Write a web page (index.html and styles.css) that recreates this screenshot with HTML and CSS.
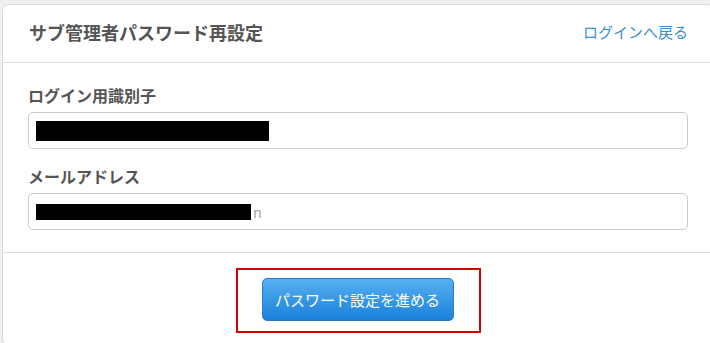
FILE: index.html
```html
<!DOCTYPE html>
<html>
  <head>
    <meta http-equiv="Content-Type" content="text/html;charset=utf-8" />
    <title>サブ管理者パスワード再設定</title>
    <link rel="stylesheet" href="styles.css">
  </head>

  <body>
    <div class="panel">
      <!-- Header -->
      <div class="panel-head">
        <h1 class="panel-title">サブ管理者パスワード再設定</h1>
        <a class="back-link" href="#">ログインへ戻る</a>
      </div>

      <!-- Form fields -->
      <div class="panel-body">
        <div class="form-group">
          <label class="field-label">ログイン用識別子</label>
          <div class="field"><span class="redact redact-id"></span></div>
        </div>

        <div class="form-group">
          <label class="field-label">メールアドレス</label>
          <div class="field"><span class="redact redact-mail"></span><span class="field-tail">n</span></div>
        </div>
      </div>

      <!-- Submit -->
      <div class="panel-foot">
        <div class="highlight">
          <button class="submit-btn">パスワード設定を進める</button>
        </div>
      </div>
    </div>
  </body>
</html>
```

FILE: styles.css
```css
html,
body {
  overflow: hidden;
}

body {
  background-color: #f0f0f0;
  color: #555555;
  font-family: "Noto Sans CJK JP", "Liberation Sans", sans-serif;
  margin: 0;
  padding: 4px 0 0 2px;
}

.panel {
  width: 710px;
  background-color: #ffffff;
  border: 1px solid #d9d9d9;
  border-radius: 6px;
}

.panel-head {
  display: flex;
  justify-content: space-between;
  align-items: center;
  padding: 15px 25px 18px 26px;
  border-bottom: 1px solid #dddddd;
}

.panel-title {
  margin: 0;
  font-size: 18px;
  line-height: 24px;
  font-weight: bold;
  color: #555555;
}

.back-link {
  font-size: 15px;
  line-height: 24px;
  color: #3b8fd3;
  text-decoration: none;
}

.panel-body {
  padding: 20px 25px 22px;
  border-bottom: 1px solid #dddddd;
}

.form-group + .form-group {
  margin-top: 15px;
}

.field-label {
  display: block;
  font-size: 16px;
  line-height: 24px;
  font-weight: bold;
  color: #555555;
  margin-bottom: 5px;
}

.field {
  display: flex;
  align-items: center;
  height: 35px;
  padding: 0 7px;
  border: 1px solid #cccccc;
  border-radius: 5px;
  font-size: 15px;
  font-weight: 300;
  color: #777777;
}

.redact {
  display: inline-block;
  background-color: #000000;
}

.redact-id {
  width: 233px;
  height: 20px;
}

.redact-mail {
  width: 215px;
  height: 16px;
}

.field-tail {
  margin-left: 2px;
}

.panel-foot {
  display: flex;
  justify-content: center;
  padding: 15px 0 11px;
}

.highlight {
  padding: 8px 25px 10px 24px;
  border: 2px solid #d60000;
}

.submit-btn {
  display: block;
  width: 192px;
  height: 43px;
  padding: 0;
  font-family: "Noto Sans CJK JP", "Liberation Sans", sans-serif;
  font-size: 15px;
  color: #ffffff;
  background: linear-gradient(#56b0f2, #1a80d8);
  border: 1px solid #2a7cc4;
  border-radius: 5px;
  cursor: pointer;
}
```
